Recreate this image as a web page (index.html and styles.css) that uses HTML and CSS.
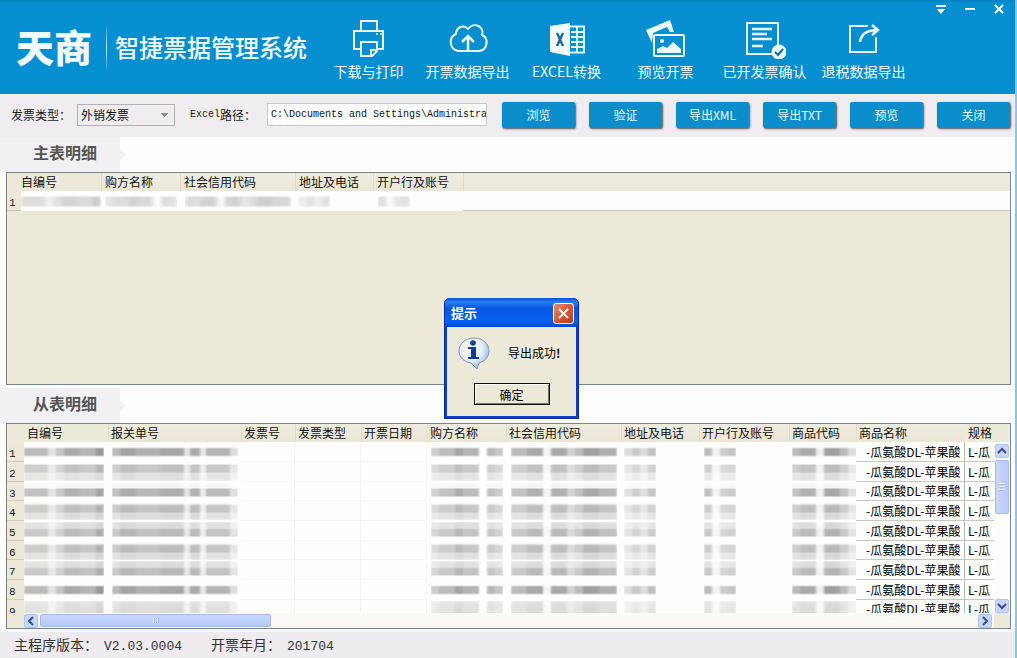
FILE: index.html
```html
<!DOCTYPE html>
<html lang="zh-CN">
<head>
<meta charset="utf-8">
<title>智捷票据管理系统</title>
<link rel="stylesheet" href="styles.css">
</head>
<body>
<div class="window">
  <header class="header">
    <div class="brand">天商</div>
    <div class="brand-line"></div>
    <h1 class="system">智捷票据管理系统</h1>
    <nav class="nav">
      <button class="nav-item" type="button">
        <svg width="40" height="40" viewBox="0 0 40 40" fill="none" stroke="#eafaff" stroke-width="2"><path d="M12 11V2h16v9M12 30H5V12h29v18h-6M12 23h16v9l-5 5H12zM28 31h-6v6"/><path d="M27 15h2M31 15h2" stroke-width="1.5"/></svg>
        <span>下载与打印</span>
      </button>
      <button class="nav-item" type="button">
        <svg width="42" height="40" viewBox="0 0 42 40" fill="none" stroke="#eafaff" stroke-width="2"><path d="M11 32a9 9 0 0 1-2-17C9 8 17 5 21 10c6-8 17-2 14 6 7 3 6 15-3 16z" stroke-linejoin="round"/><path d="M21 32V18M15 23l6-6 6 6" stroke-width="2.5"/></svg>
        <span>开票数据导出</span>
      </button>
      <button class="nav-item" type="button">
        <svg width="40" height="40" viewBox="0 0 40 40"><path d="M3 7l20-3v33L3 33z" fill="#f4fcff"/><path d="M23 7.500h14v26H23" fill="none" stroke="#dff6ff" stroke-width="2"/><path d="M24 13h12M24 18h12M24 23h12M24 28h12M30 8v25" stroke="#dff6ff" stroke-width="2"/><path d="M10 14l6 13M16 14l-6 13" stroke="#17699a" stroke-width="2.400"/></svg>
        <span>EXCEL转换</span>
      </button>
      <button class="nav-item" type="button">
        <svg width="42" height="40" viewBox="0 0 42 40" fill="none" stroke="#eafaff" stroke-width="2"><path d="M7 24L1 11l24-10 4 12h-4l-3-5-14 6z" fill="#eafaff" stroke="none"/><rect x="9" y="16" width="30" height="21" rx="1"/><circle cx="17" cy="22" r="2" fill="#eafaff" stroke="none"/><path d="M12 34v-4l6-3 4 2 6-6 8 7v4z" fill="#eafaff" stroke="none"/></svg>
        <span>预览开票</span>
      </button>
      <button class="nav-item" type="button">
        <svg width="42" height="40" viewBox="0 0 42 40" fill="none" stroke="#eafaff" stroke-width="2"><path d="M28 35H3V4h31v22"/><path d="M8 10h20M8 15h15M8 20h20M8 27h11" stroke-width="2.500"/><circle cx="35" cy="33" r="7.500" fill="#eafaff" stroke="none"/><path d="M31 33l3 3 5-6" stroke="#17699a"/></svg>
        <span>已开发票确认</span>
      </button>
      <button class="nav-item" type="button">
        <svg width="40" height="40" viewBox="0 0 40 40" fill="none" stroke="#eafaff" stroke-width="2"><path d="M24 7H6v26h26V18"/><path d="M16 23c1-8 7-12 18-12M28 6l6 5-6 5" stroke-width="2.500"/></svg>
        <span>退税数据导出</span>
      </button>
    </nav>
    <div class="controls">
      <button type="button" aria-label="菜单"><svg width="12" height="12" viewBox="0 0 12 12"><path d="M1 3h10" stroke="#fff" stroke-width="2"/><path d="M2 6h8L6 11z" fill="#fff"/></svg></button>
      <button type="button" aria-label="最小化"><svg width="12" height="12" viewBox="0 0 12 12"><path d="M1 6h10" stroke="#fff" stroke-width="2"/></svg></button>
      <button type="button" aria-label="关闭窗口"><svg width="12" height="12" viewBox="0 0 12 12"><path d="M2 2l8 8M10 2l-8 8" stroke="#fff" stroke-width="2"/></svg></button>
    </div>
  </header>

  <form class="toolbar">
    <label class="type-label" for="type">发票类型：</label>
    <select id="type" class="type"><option>外销发票</option></select>
    <label class="path-label" for="path"><span class="latin">Excel</span><span>路径：</span></label>
    <input id="path" class="path" type="text" value="C:\Documents and Settings\Administra">
    <div class="actions">
      <button type="button">浏览</button>
      <button type="button">验证</button>
      <button type="button">导出XML</button>
      <button type="button">导出TXT</button>
      <button type="button">预览</button>
      <button type="button">关闭</button>
    </div>
  </form>

  <div class="tab-row"><h2 class="tab">主表明细</h2></div>
  <section class="panel main-panel">
    <table class="grid">
      <colgroup><col class="w14"><col class="w80"><col class="w79"><col class="w115"><col class="w78"><col class="w90"><col></colgroup>
      <thead><tr><th></th><th>自编号</th><th>购方名称</th><th>社会信用代码</th><th>地址及电话</th><th>开户行及账号</th><th></th></tr></thead>
      <tbody><tr class="faint"><td class="num">1</td><td><i class="mask a"></i></td><td><i class="mask c"></i></td><td><i class="mask d"></i></td><td><i class="mask e"></i></td><td><i class="mask f"></i></td><td class="rest"></td></tr></tbody>
    </table>
  </section>

  <div class="tab-row"><h2 class="tab">从表明细</h2></div>
  <section class="panel detail-panel">
    <div class="view">
      <div class="clip">
        <table class="grid detail">
          <colgroup><col class="w17"><col class="w84"><col class="w133"><col class="w54"><col class="w66"><col class="w66"><col class="w79"><col class="w115"><col class="w78"><col class="w90"><col class="w67"><col class="w109"><col></colgroup>
          <thead><tr><th class="corner"></th><th>自编号</th><th>报关单号</th><th>发票号</th><th>发票类型</th><th>开票日期</th><th>购方名称</th><th>社会信用代码</th><th>地址及电话</th><th>开户行及账号</th><th>商品代码</th><th>商品名称</th><th>规格</th></tr></thead>
          <tbody>
            <tr class="r1"><td class="num">1</td><td><i class="mask a"></i></td><td><i class="mask b"></i></td><td></td><td></td><td></td><td><i class="mask c"></i></td><td><i class="mask d"></i></td><td><i class="mask e"></i></td><td><i class="mask f"></i></td><td><i class="mask g"></i></td><td class="name">-瓜氨酸DL-苹果酸</td><td class="spec">L-瓜</td></tr>
            <tr class="r2"><td class="num">2</td><td><i class="mask a"></i></td><td><i class="mask b"></i></td><td></td><td></td><td></td><td><i class="mask c"></i></td><td><i class="mask d"></i></td><td><i class="mask e"></i></td><td><i class="mask f"></i></td><td><i class="mask g"></i></td><td class="name">-瓜氨酸DL-苹果酸</td><td class="spec">L-瓜</td></tr>
            <tr class="r3"><td class="num">3</td><td><i class="mask a"></i></td><td><i class="mask b"></i></td><td></td><td></td><td></td><td><i class="mask c"></i></td><td><i class="mask d"></i></td><td><i class="mask e"></i></td><td><i class="mask f"></i></td><td><i class="mask g"></i></td><td class="name">-瓜氨酸DL-苹果酸</td><td class="spec">L-瓜</td></tr>
            <tr class="r4"><td class="num">4</td><td><i class="mask a"></i></td><td><i class="mask b"></i></td><td></td><td></td><td></td><td><i class="mask c"></i></td><td><i class="mask d"></i></td><td><i class="mask e"></i></td><td><i class="mask f"></i></td><td><i class="mask g"></i></td><td class="name">-瓜氨酸DL-苹果酸</td><td class="spec">L-瓜</td></tr>
            <tr class="r5"><td class="num">5</td><td><i class="mask a"></i></td><td><i class="mask b"></i></td><td></td><td></td><td></td><td><i class="mask c"></i></td><td><i class="mask d"></i></td><td><i class="mask e"></i></td><td><i class="mask f"></i></td><td><i class="mask g"></i></td><td class="name">-瓜氨酸DL-苹果酸</td><td class="spec">L-瓜</td></tr>
            <tr class="r4"><td class="num">6</td><td><i class="mask a"></i></td><td><i class="mask b"></i></td><td></td><td></td><td></td><td><i class="mask c"></i></td><td><i class="mask d"></i></td><td><i class="mask e"></i></td><td><i class="mask f"></i></td><td><i class="mask g"></i></td><td class="name">-瓜氨酸DL-苹果酸</td><td class="spec">L-瓜</td></tr>
            <tr class="r5"><td class="num">7</td><td><i class="mask a"></i></td><td><i class="mask b"></i></td><td></td><td></td><td></td><td><i class="mask c"></i></td><td><i class="mask d"></i></td><td><i class="mask e"></i></td><td><i class="mask f"></i></td><td><i class="mask g"></i></td><td class="name">-瓜氨酸DL-苹果酸</td><td class="spec">L-瓜</td></tr>
            <tr class="r1"><td class="num">8</td><td><i class="mask a"></i></td><td><i class="mask b"></i></td><td></td><td></td><td></td><td><i class="mask c"></i></td><td><i class="mask d"></i></td><td><i class="mask e"></i></td><td><i class="mask f"></i></td><td><i class="mask g"></i></td><td class="name">-瓜氨酸DL-苹果酸</td><td class="spec">L-瓜</td></tr>
            <tr class="r9"><td class="num">9</td><td><i class="mask a"></i></td><td><i class="mask b"></i></td><td></td><td></td><td></td><td><i class="mask c"></i></td><td><i class="mask d"></i></td><td><i class="mask e"></i></td><td><i class="mask f"></i></td><td><i class="mask g"></i></td><td class="name">-瓜氨酸DL-苹果酸</td><td class="spec">L-瓜</td></tr>
          </tbody>
        </table>
      </div>
      <div class="vbar">
        <button class="arrow" type="button" aria-label="向上"><svg width="10" height="10" viewBox="0 0 10 10"><path d="M1 7l4-4 4 4"/></svg></button>
        <div class="vthumb"></div>
        <button class="arrow end" type="button" aria-label="向下"><svg width="10" height="10" viewBox="0 0 10 10"><path d="M1 3l4 4 4-4"/></svg></button>
      </div>
    </div>
    <div class="hbar">
      <button class="arrow" type="button" aria-label="向左"><svg width="10" height="10" viewBox="0 0 10 10"><path d="M7 1L3 5l4 4"/></svg></button>
      <div class="hthumb"></div>
      <button class="arrow end" type="button" aria-label="向右"><svg width="10" height="10" viewBox="0 0 10 10"><path d="M3 1l4 4-4 4"/></svg></button>
      <div class="grip"></div>
    </div>
  </section>

  <footer class="status">
    <div>主程序版本：<span class="mono">V2.03.0004</span></div>
    <div>开票年月：<span class="mono">201704</span></div>
  </footer>

  <div class="dialog" role="dialog" aria-labelledby="dlg-title">
    <div class="dialog-bar">
      <span id="dlg-title">提示</span>
      <button class="dialog-close" type="button" aria-label="关闭"><svg width="13" height="13" viewBox="0 0 13 13"><path d="M2 2l9 9M11 2l-9 9" stroke="#fff" stroke-width="2"/></svg></button>
    </div>
    <div class="dialog-body">
      <div class="message">
        <svg width="34" height="34" viewBox="0 0 34 34">
          <defs><radialGradient id="bubble" cx="40%" cy="35%" r="65%"><stop offset="0" stop-color="#fff"/><stop offset="0.600" stop-color="#e6eef8"/><stop offset="1" stop-color="#9db8dc"/></radialGradient></defs>
          <path d="M17 2c9 0 15 6 15 13 0 6-4 10-10 12l-2 6-6-6C7 26 2 21 2 15 2 8 8 2 17 2z" fill="url(#bubble)" stroke="#7f96b8" stroke-width="1"/>
          <circle cx="16" cy="7" r="2.800" fill="#123a96"/><path d="M11 11h8v10h3v2H11v-2h3v-8h-3z" fill="#123a96"/>
        </svg>
        <span>导出成功<b>!</b></span>
      </div>
      <button class="ok" type="button">确定</button>
    </div>
  </div>
</div>
</body>
</html>
```
FILE: styles.css
```css
* { box-sizing: border-box; }

body {
  margin: 0;
  font-family: "Noto Sans CJK SC", sans-serif;
  font-size: 12px;
  line-height: 18px;
  color: #1a1a1a;
}

button { font-family: inherit; margin: 0; padding: 0; border: 0; background: none; }
h1, h2 { margin: 0; }

.window {
  display: flex;
  flex-direction: column;
  height: 100vh;
  min-height: 560px;
  overflow: hidden;
  background: #fdfdfe;
  border-right: 2px solid #86c6ea;
}

/* Header */
.header {
  position: relative;
  display: flex;
  align-items: center;
  flex: none;
  height: 94px;
  padding-left: 16px;
  background: #068fd0;
  border-top: 2px solid #0784c4;
  color: #f2fcff;
}
.brand { width: 90px; padding-bottom: 4px; font-size: 38px; font-weight: 900; line-height: 48px; white-space: nowrap; }
.brand-line { width: 1px; height: 52px; background: linear-gradient(transparent, #c9ecfa, transparent); }
.system { width: 212px; padding: 0 0 2px 8px; font-size: 24px; font-weight: 500; line-height: 36px; white-space: nowrap; }
.nav { display: flex; padding-top: 4px; }
.nav-item {
  display: flex;
  flex-direction: column;
  align-items: center;
  gap: 2px;
  width: 99px;
  color: #f2fcff;
  font-size: 14px;
  line-height: 20px;
  white-space: nowrap;
}
.controls { position: absolute; top: 1px; right: 10px; display: flex; gap: 17px; }
.controls button { display: flex; width: 12px; height: 14px; }

/* Toolbar */
.toolbar {
  display: flex;
  align-items: center;
  flex: none;
  height: 43px;
  padding: 0 5px 2px 11px;
  background: #efedef;
}
.type-label { width: 66px; white-space: nowrap; }
.type {
  appearance: none;
  width: 98px;
  height: 22px;
  padding: 0 3px;
  border: 1px solid #b3b1b3;
  border-radius: 0;
  background-color: #efedef;
  background-image: linear-gradient(-135deg, #8a888a 50%, transparent 50%), linear-gradient(135deg, #8a888a 50%, transparent 50%);
  background-position: right 9px center, right 5px center;
  background-size: 4px 4px;
  background-repeat: no-repeat;
  font: 12px/18px "Noto Sans CJK SC", sans-serif;
  color: #111;
}
.path-label { display: flex; align-items: center; width: 77px; margin-left: 15px; white-space: nowrap; }
.latin { font-family: "Liberation Mono", monospace; font-size: 10px; }
.path {
  flex: 1 1 220px;
  min-width: 80px;
  height: 23px;
  padding: 0 0 0 3px;
  border: 1px solid #c9c7c9;
  background: #fff;
  font: 10px/18px "Liberation Mono", monospace;
  color: #111;
}
.actions { display: flex; gap: 14px; margin-left: 15px; }
.actions button {
  width: 73px;
  height: 26px;
  border-radius: 2px;
  background: #0b8dcb;
  box-shadow: 1px 1px 2px #555;
  color: #e6faff;
  font-size: 12px;
}

/* Section tabs */
.tab-row { flex: none; height: 35px; display: flex; }
.tab {
  position: relative;
  width: 120px;
  padding: 5px 0 0 33px;
  background: #f1f0f2;
  color: #555;
  font-size: 16px;
  line-height: 20px;
}
.tab::after {
  content: "";
  position: absolute;
  left: 100%;
  top: 12px;
  border: 6px solid transparent;
  border-left-color: #f1f0f2;
}

/* Panels */
.panel {
  margin: 0 4px 0 6px;
  border: 1px solid #77858f;
  overflow: hidden;
  min-height: 0;
}
.main-panel { flex: 214 1 0; margin-bottom: 3px; background: #ece9d8; }
.detail-panel {
  flex: 206 1 0;
  display: flex;
  flex-direction: column;
  background: linear-gradient(#ecead9 18px, #fdfdfb 18px);
}
.view { display: flex; flex: 1 1 0; min-height: 0; }
.clip { flex: 1; min-width: 0; overflow: hidden; }

.grid { width: 100%; table-layout: fixed; border-collapse: separate; border-spacing: 0; }
.grid th, .grid td { padding: 0; overflow: hidden; white-space: nowrap; text-align: left; font-weight: 400; }
.grid th {
  height: 18px;
  padding-left: 3px;
  line-height: 18px;
  color: #111;
  background: linear-gradient(90deg, #dedbcc 1px, transparent 1px), linear-gradient(#efede0, #eae7d7);
}
.grid th:first-child { background: none; }
.main-panel th { padding-left: 4px; }
.main-panel th:nth-child(2) { padding-left: 0; background: none; }
.detail th:nth-child(2), .detail th:last-child { background: #ecead9; }
.grid .corner { background: linear-gradient(135deg, transparent 50%, #c5c2b2 50%) no-repeat right 3px bottom 2px / 7px 7px; }
.grid td { height: 20px; line-height: 18px; background: #fefefc; }
.grid tr:nth-child(3n) td { height: 19px; }
.grid .num {
  padding: 5px 0 0 2px;
  background: #ece9d8;
  border-bottom: 1px solid #cfccbc;
  font: 11px/12px "Liberation Mono", monospace;
}
.grid .rest { border-bottom: 1px solid #c9c7ba; }
.detail td:nth-child(n+4):nth-child(-n+6) { border-right: 1px solid #f5f4ee; border-bottom: 1px solid #f7f5f1; }
.grid .name { padding-left: 10px; border-right: 1px solid #b9b8b4; border-bottom: 1px solid #c9c8c4; color: #000; }
.grid .spec { padding-left: 3px; border-bottom: 1px solid #c9c8c4; color: #000; }

.w14 { width: 14px; }
.w17 { width: 17px; }
.w54 { width: 54px; }
.w66 { width: 66px; }
.w67 { width: 67px; }
.w78 { width: 78px; }
.w79 { width: 79px; }
.w80 { width: 80px; }
.w84 { width: 84px; }
.w90 { width: 90px; }
.w109 { width: 109px; }
.w115 { width: 115px; }
.w133 { width: 133px; }

/* Pixelated private values: columns set the blocks, rows set the bands */
.mask { display: block; height: 18px; filter: blur(1px); }
.a { width: 80px; background: linear-gradient(90deg, #bbb 24px, #e2e2e2 24px 32px, #c4c4c4 32px 40px, #aaa 40px 56px, #b4b4b4 56px 72px, #999 72px); }
.b { width: 126px; margin-left: 4px; background: linear-gradient(90deg, #bbb 8px, #a4a4a4 8px 24px, #b0b0b0 24px 48px, #a6a6a6 48px 72px, #e2e2e2 72px 78px, #aaa 78px 88px, #e8e8e8 88px 94px, #b4b4b4 94px 118px, #ddd 118px); }
.c { width: 72px; margin-left: 4px; background: linear-gradient(90deg, #ccc 8px, #bbb 8px 24px, #a4a4a4 24px 32px, #b4b4b4 32px 48px, #fff 48px 56px, #b8b8b8 56px 64px, #c8c8c8 64px); }
.d { width: 106px; margin-left: 5px; background: linear-gradient(90deg, #bbb 16px, #a8a8a8 16px 32px, #f4f4f4 32px 40px, #a8a8a8 40px 56px, #d0d0d0 56px 64px, #bbb 64px 72px, #a0a0a0 72px 88px, #b0b0b0 88px); }
.e { width: 32px; margin-left: 3px; background: linear-gradient(90deg, #ddd 8px, #c8c8c8 8px 16px, #ddd 16px 24px, #c0c0c0 24px); }
.f { width: 32px; margin-left: 5px; background: linear-gradient(90deg, #bbb 8px, #f4f4f4 8px 16px, #ccc 16px 24px, #c4c4c4 24px); }
.g { width: 66px; margin-left: 3px; background: linear-gradient(90deg, #bbb 8px, #aaa 8px 24px, #f0f0f0 24px 32px, #a0a0a0 32px 48px, #bbb 48px 56px, #ddd 56px); }
.faint .mask { filter: blur(2px); mask-image: linear-gradient(transparent 3px, rgba(0,0,0,0.5) 6px 13px, transparent 16px); }
.r1 .mask { mask-image: linear-gradient(transparent 4px, #000 6px 12px, transparent 14px); }
.r2 .mask { mask-image: linear-gradient(transparent 1px, rgba(0,0,0,0.7) 2px 9px, rgba(0,0,0,0.35) 10px); }
.r3 .mask { mask-image: linear-gradient(rgba(0,0,0,0.1) 5px, rgba(0,0,0,0.9) 6px 13px, transparent 14px); }
.r4 .mask { mask-image: linear-gradient(transparent 1px, rgba(0,0,0,0.75) 4px 10px, rgba(0,0,0,0.4) 11px); }
.r5 .mask { mask-image: linear-gradient(rgba(0,0,0,0.4) 6px, rgba(0,0,0,0.8) 8px 14px, transparent 15px); }
.r9 .mask { mask-image: linear-gradient(rgba(0,0,0,0.35), rgba(0,0,0,0.45)); }

/* Scroll bars */
.arrow {
  display: flex;
  align-items: center;
  justify-content: center;
  flex: none;
  width: 14px;
  height: 14px;
  border: 1px solid #b3c3ee;
  border-radius: 2px;
  background: #c8d6fb;
}
.arrow svg { fill: none; stroke: #3c4f84; stroke-width: 2; }
.vbar { display: flex; flex-direction: column; align-items: center; gap: 2px; width: 16px; margin-top: 20px; }
.vthumb {
  width: 14px;
  height: 54px;
  border: 1px solid #a5baf0;
  border-radius: 2px;
  background: repeating-linear-gradient(#eef3ff 0 1px, #a9bdf2 1px 2px, transparent 2px 3px) no-repeat center / 6px 8px, linear-gradient(90deg, #cad8fc, #b8c9fa);
}
.vbar .end { margin-top: auto; }
.hbar { display: flex; align-items: center; flex: none; gap: 2px; height: 15px; padding-left: 17px; background: linear-gradient(90deg, #ece9d8 17px, #fbfaf7 17px); }
.hthumb {
  width: 231px;
  height: 13px;
  border: 1px solid #a5baf0;
  border-radius: 2px;
  background: repeating-linear-gradient(90deg, #eef3ff 0 1px, #a0b4ec 1px 2px) no-repeat center / 6px 5px, linear-gradient(#c9d7fd, #b8c9fa);
}
.hbar .end { margin-left: auto; }
.grip { width: 16px; height: 15px; background: #ece9d8; }

/* Status bar */
.status {
  display: flex;
  gap: 29px;
  flex: none;
  height: 29px;
  padding: 4px 14px 0;
  border-top: 3px solid #f4f8fd;
  background: #eeecee;
  color: #333;
  font-size: 14px;
  line-height: 16px;
}
.mono { margin-left: 6px; font-family: "Liberation Mono", monospace; font-size: 13px; }

/* Message box */
.dialog {
  position: absolute;
  left: 444px;
  top: 298px;
  width: 135px;
  padding: 0 3px 3px;
  border-radius: 6px 6px 0 0;
  background: #0a3fc4;
  box-shadow: inset 0 0 0 1px #0a2c9a;
}
.dialog-bar {
  display: flex;
  align-items: center;
  justify-content: space-between;
  height: 29px;
  margin: 0 -2px;
  padding: 1px 4px 0 6px;
  border-radius: 5px 5px 0 0;
  background: linear-gradient(#0a4fd6, #2a7cf8 4px, #0757e0 10px, #0560f0 24px, #0446c4);
  color: #fff;
  font-size: 13px;
  font-weight: 700;
}
.dialog-close {
  display: flex;
  align-items: center;
  justify-content: center;
  width: 21px;
  height: 21px;
  border: 1px solid #fff;
  border-radius: 3px;
  background: linear-gradient(135deg, #e88a6c, #d3502e 60%, #b83c1e);
}
.dialog-body { display: flex; flex-direction: column; align-items: center; gap: 13px; padding: 9px 0 11px; background: #ece9d8; color: #000; }
.message { display: flex; align-items: center; gap: 17px; align-self: stretch; padding-left: 10px; white-space: nowrap; }
.ok { width: 76px; height: 22px; border: 1px solid #111; background: #ece9d8; box-shadow: inset 1px 1px 0 #fff, inset -1px -1px 0 #77756a; font-size: 12px; color: #000; }
```
